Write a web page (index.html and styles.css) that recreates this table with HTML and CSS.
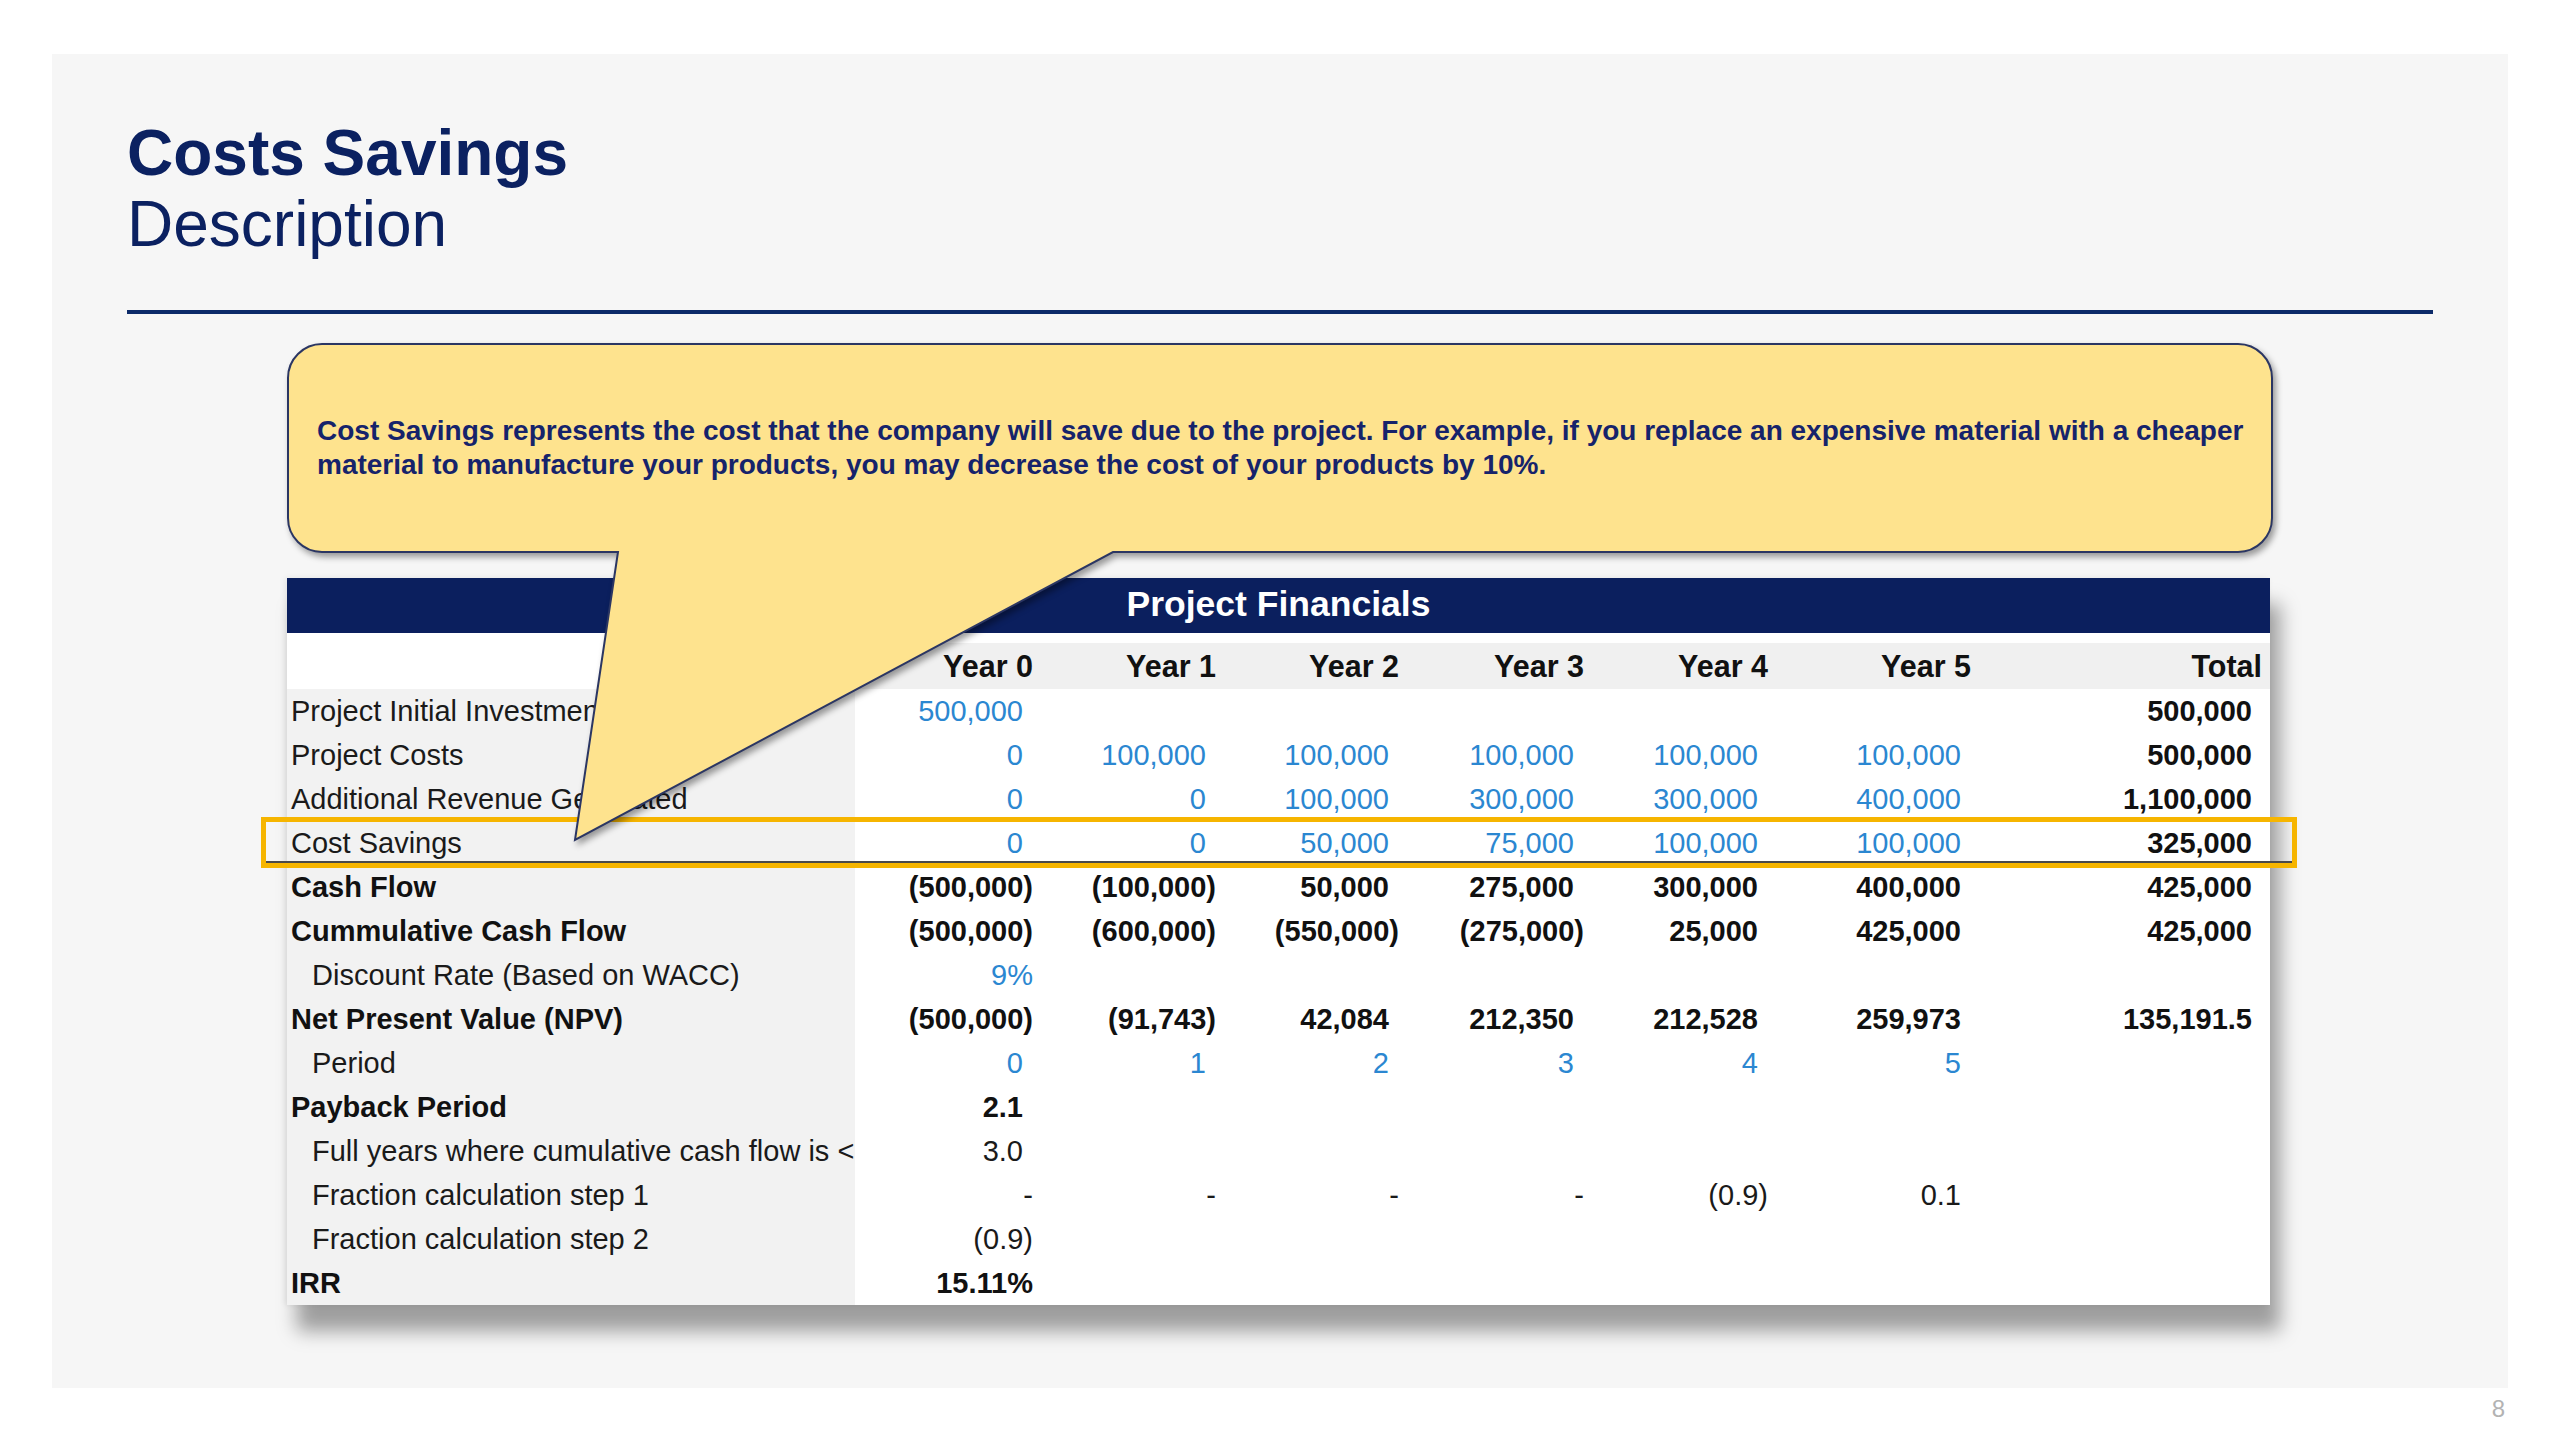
FILE: index.html
```html
<!DOCTYPE html>
<html lang="en">
<head>
<meta charset="utf-8">
<title>Costs Savings – Description</title>
<link rel="stylesheet" href="styles.css">
</head>
<body>
<div class="slide">
  <header class="title">
    <h1>Costs Savings</h1>
    <h2>Description</h2>
  </header>
  <div class="rule"></div>

  <div class="callout">
    <svg class="bubble" width="1990" height="505" viewBox="0 0 1990 505" aria-hidden="true">
      <path d="M35,1 H1951 A34,34 0 0 1 1985,35 V175 A34,34 0 0 1 1951,209 H826 L288,497 L331,209 H35 A34,34 0 0 1 1,175 V35 A34,34 0 0 1 35,1 Z"/>
    </svg>
    <p class="callout-text">Cost Savings represents the cost that the company will save due to the project. For example, if you replace an expensive material with a cheaper<br>material to manufacture your products, you may decrease the cost of your products by 10%.</p>
  </div>

  <div class="fin">
    <div class="fin-head">Project Financials</div>
    <div class="row hdr">
      <div class="lab"></div>
      <div class="c">Year 0</div><div class="c">Year 1</div><div class="c">Year 2</div><div class="c">Year 3</div><div class="c">Year 4</div><div class="c">Year 5</div><div class="c">Total</div>
    </div>
    <div class="row">
      <div class="lab">Project Initial Investment</div>
      <div class="c in p">500,000</div><div class="c"></div><div class="c"></div><div class="c"></div><div class="c"></div><div class="c"></div><div class="c b p">500,000</div>
    </div>
    <div class="row">
      <div class="lab">Project Costs</div>
      <div class="c in p">0</div><div class="c in p">100,000</div><div class="c in p">100,000</div><div class="c in p">100,000</div><div class="c in p">100,000</div><div class="c in p">100,000</div><div class="c b p">500,000</div>
    </div>
    <div class="row">
      <div class="lab">Additional Revenue Generated</div>
      <div class="c in p">0</div><div class="c in p">0</div><div class="c in p">100,000</div><div class="c in p">300,000</div><div class="c in p">300,000</div><div class="c in p">400,000</div><div class="c b p">1,100,000</div>
    </div>
    <div class="row hl">
      <div class="lab">Cost Savings</div>
      <div class="c in p">0</div><div class="c in p">0</div><div class="c in p">50,000</div><div class="c in p">75,000</div><div class="c in p">100,000</div><div class="c in p">100,000</div><div class="c b p">325,000</div>
    </div>
    <div class="row">
      <div class="lab b">Cash Flow</div>
      <div class="c b">(500,000)</div><div class="c b">(100,000)</div><div class="c b p">50,000</div><div class="c b p">275,000</div><div class="c b p">300,000</div><div class="c b p">400,000</div><div class="c b p">425,000</div>
    </div>
    <div class="row">
      <div class="lab b">Cummulative Cash Flow</div>
      <div class="c b">(500,000)</div><div class="c b">(600,000)</div><div class="c b">(550,000)</div><div class="c b">(275,000)</div><div class="c b p">25,000</div><div class="c b p">425,000</div><div class="c b p">425,000</div>
    </div>
    <div class="row">
      <div class="lab ind">Discount Rate (Based on WACC)</div>
      <div class="c in">9%</div><div class="c"></div><div class="c"></div><div class="c"></div><div class="c"></div><div class="c"></div><div class="c"></div>
    </div>
    <div class="row">
      <div class="lab b">Net Present Value (NPV)</div>
      <div class="c b">(500,000)</div><div class="c b">(91,743)</div><div class="c b p">42,084</div><div class="c b p">212,350</div><div class="c b p">212,528</div><div class="c b p">259,973</div><div class="c b p">135,191.5</div>
    </div>
    <div class="row">
      <div class="lab ind">Period</div>
      <div class="c in p">0</div><div class="c in p">1</div><div class="c in p">2</div><div class="c in p">3</div><div class="c in p">4</div><div class="c in p">5</div><div class="c"></div>
    </div>
    <div class="row">
      <div class="lab b">Payback Period</div>
      <div class="c b p">2.1</div><div class="c"></div><div class="c"></div><div class="c"></div><div class="c"></div><div class="c"></div><div class="c"></div>
    </div>
    <div class="row">
      <div class="lab ind">Full years where cumulative cash flow is &lt;</div>
      <div class="c p">3.0</div><div class="c"></div><div class="c"></div><div class="c"></div><div class="c"></div><div class="c"></div><div class="c"></div>
    </div>
    <div class="row">
      <div class="lab ind">Fraction calculation step 1</div>
      <div class="c">-</div><div class="c">-</div><div class="c">-</div><div class="c">-</div><div class="c">(0.9)</div><div class="c p">0.1</div><div class="c"></div>
    </div>
    <div class="row">
      <div class="lab ind">Fraction calculation step 2</div>
      <div class="c">(0.9)</div><div class="c"></div><div class="c"></div><div class="c"></div><div class="c"></div><div class="c"></div><div class="c"></div>
    </div>
    <div class="row">
      <div class="lab b">IRR</div>
      <div class="c b">15.11%</div><div class="c"></div><div class="c"></div><div class="c"></div><div class="c"></div><div class="c"></div><div class="c"></div>
    </div>
  </div>
</div>
<div class="pagenum">8</div>
</body>
</html>
```

FILE: styles.css
```css
* { box-sizing: border-box; }

html, body {
  margin: 0;
  padding: 0;
  background: #ffffff;
}

body {
  width: 2560px;
  height: 1440px;
  overflow: hidden;
  font-family: "Liberation Sans", Arial, Helvetica, sans-serif;
}

.slide {
  margin: 54px 0 0 52px;
  width: 2456px;
  height: 1334px;
  padding-top: 64px;
  background: #f6f6f6;
}

.title h1,
.title h2 {
  margin: 0;
  padding-left: 75px;
  font-size: 64px;
  line-height: 71px;
  color: #0b2161;
}

.title h1 { font-weight: 700; }
.title h2 { font-weight: 400; }

.rule {
  margin: 50px 0 0 75px;
  width: 2306px;
  height: 4px;
  background: #0c2a69;
}

/* callout bubble */
.callout {
  position: relative;
  z-index: 2;
  margin: 29px 0 0 235px;
  width: 1986px;
  height: 210px;
  display: flex;
  align-items: center;
}

.bubble {
  position: absolute;
  left: 0;
  top: 0;
  overflow: visible;
  filter: drop-shadow(3px 4px 3px rgba(0, 0, 0, 0.38));
}

.bubble path {
  fill: #fee38e;
  stroke: #2b3663;
  stroke-width: 2;
}

.callout-text {
  position: relative;
  margin: 0;
  padding-left: 30px;
  white-space: nowrap;
  font-size: 28px;
  line-height: 34px;
  font-weight: 700;
  color: #16236b;
}

/* financial table */
.fin {
  position: relative;
  z-index: 1;
  margin: 25px 0 0 235px;
  width: 1983px;
  background: #ffffff;
  box-shadow: 10px 26px 18px rgba(0, 0, 0, 0.36), -2px 0 6px rgba(0, 0, 0, 0.08);
  color: #1a1a1a;
}

.fin-head {
  height: 55px;
  background: #0b1f5e;
  color: #ffffff;
  font-weight: 700;
  font-size: 35.5px;
  line-height: 52px;
  text-align: center;
}

.row {
  display: grid;
  grid-template-columns: 568px 186px 183px 183px 185px 184px 203px 291px;
  height: 44px;
  font-size: 29px;
  line-height: 44px;
}

.row .lab {
  background: #f2f2f2;
  padding-left: 4px;
  white-space: nowrap;
  overflow: hidden;
}

.row .lab.ind { padding-left: 25px; }

.row .c {
  text-align: right;
  padding-right: 8px;
  white-space: nowrap;
  color: #1a1a1a;
}

.row .c.p { padding-right: 18px; }
.row .b { font-weight: 700; color: #111111; }
.row .c.in { color: #2b87d1; }

.row.hdr {
  height: 56px;
}

.row.hdr .lab { background: #ffffff; }

.row.hdr .c {
  padding-top: 11px;
  line-height: 45px;
  font-size: 30.5px;
  font-weight: 700;
  color: #111111;
  background: linear-gradient(#ffffff 0 10px, #f0f0f0 10px);
}

.row.hl {
  position: relative;
}

.row.hl::after {
  content: "";
  position: absolute;
  left: -26px;
  right: -27px;
  top: -4px;
  bottom: -3px;
  border: 5px solid #f6b500;
  box-shadow: inset 0 -2px 0 #4a4a4a;
}

.pagenum {
  width: 2505px;
  padding-top: 9px;
  text-align: right;
  font-size: 24px;
  line-height: 24px;
  color: #b3b3b3;
}
```
